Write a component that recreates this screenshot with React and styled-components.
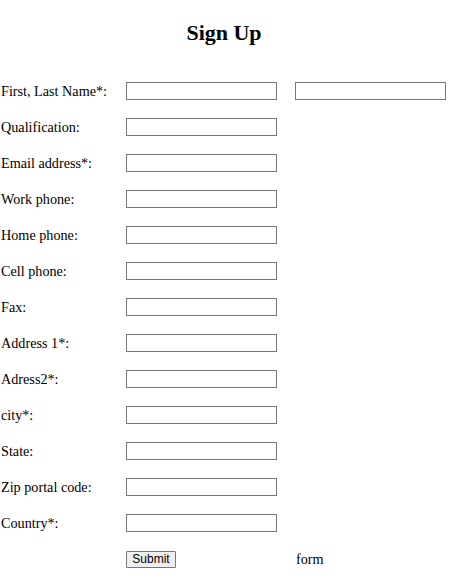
import React from "react";
import styled, { createGlobalStyle } from "styled-components";

const Global = createGlobalStyle`
  body {
    margin: 0;
    background: #fff;
    font-family: "Liberation Serif", "Times New Roman", serif;
    color: #000;
  }
`;

const Page = styled.div`
  width: 448px;
  padding-top: 19px;
`;

const Title = styled.h2`
  margin: 0 0 26px;
  text-align: center;
  font-size: 22px;
  line-height: 28px;
  font-weight: bold;
`;

const Form = styled.form`
  display: grid;
  grid-template-columns: 126px 169px 152px;
  grid-auto-rows: 36px;
  align-items: center;
`;

const Label = styled.label`
  grid-column: 1;
  padding-left: 1px;
  font-size: 14.2px;
`;

const Field = styled.input`
  box-sizing: border-box;
  width: 151px;
  height: 18px;
  margin: 0;
  padding: 1px 2px;
  border: 1px solid #767676;
  background: #fff;
  font-family: "Liberation Sans", Arial, sans-serif;
  font-size: 11px;
  grid-column: ${(p) => p.$col || 2};
`;

const Button = styled.button`
  box-sizing: border-box;
  grid-column: 2;
  justify-self: start;
  width: 50px;
  height: 17px;
  margin: 0;
  padding: 0 4px;
  border: 1px solid #767676;
  border-radius: 1px;
  background: #efefef;
  font-family: "Liberation Sans", Arial, sans-serif;
  font-size: 12px;
  line-height: 15px;
  color: #000;
`;

const Note = styled.span`
  grid-column: 3;
  font-size: 14.2px;
  padding-left: 1px;
`;

const rows = [
  "Qualification:",
  "Email address*:",
  "Work phone:",
  "Home phone:",
  "Cell phone:",
  "Fax:",
  "Address 1*:",
  "Adress2*:",
  "city*:",
  "State:",
  "Zip portal code:",
  "Country*:",
];

export default function App() {
  return (
    <Page>
      <Global />
      <Title>Sign Up</Title>
      <Form onSubmit={(e) => e.preventDefault()}>
        <Label>First, Last Name*:</Label>
        <Field type="text" />
        <Field type="text" $col={3} />
        {rows.map((r) => (
          <React.Fragment key={r}>
            <Label>{r}</Label>
            <Field type="text" />
          </React.Fragment>
        ))}
        <Button type="submit">Submit</Button>
        <Note>form</Note>
      </Form>
    </Page>
  );
}
